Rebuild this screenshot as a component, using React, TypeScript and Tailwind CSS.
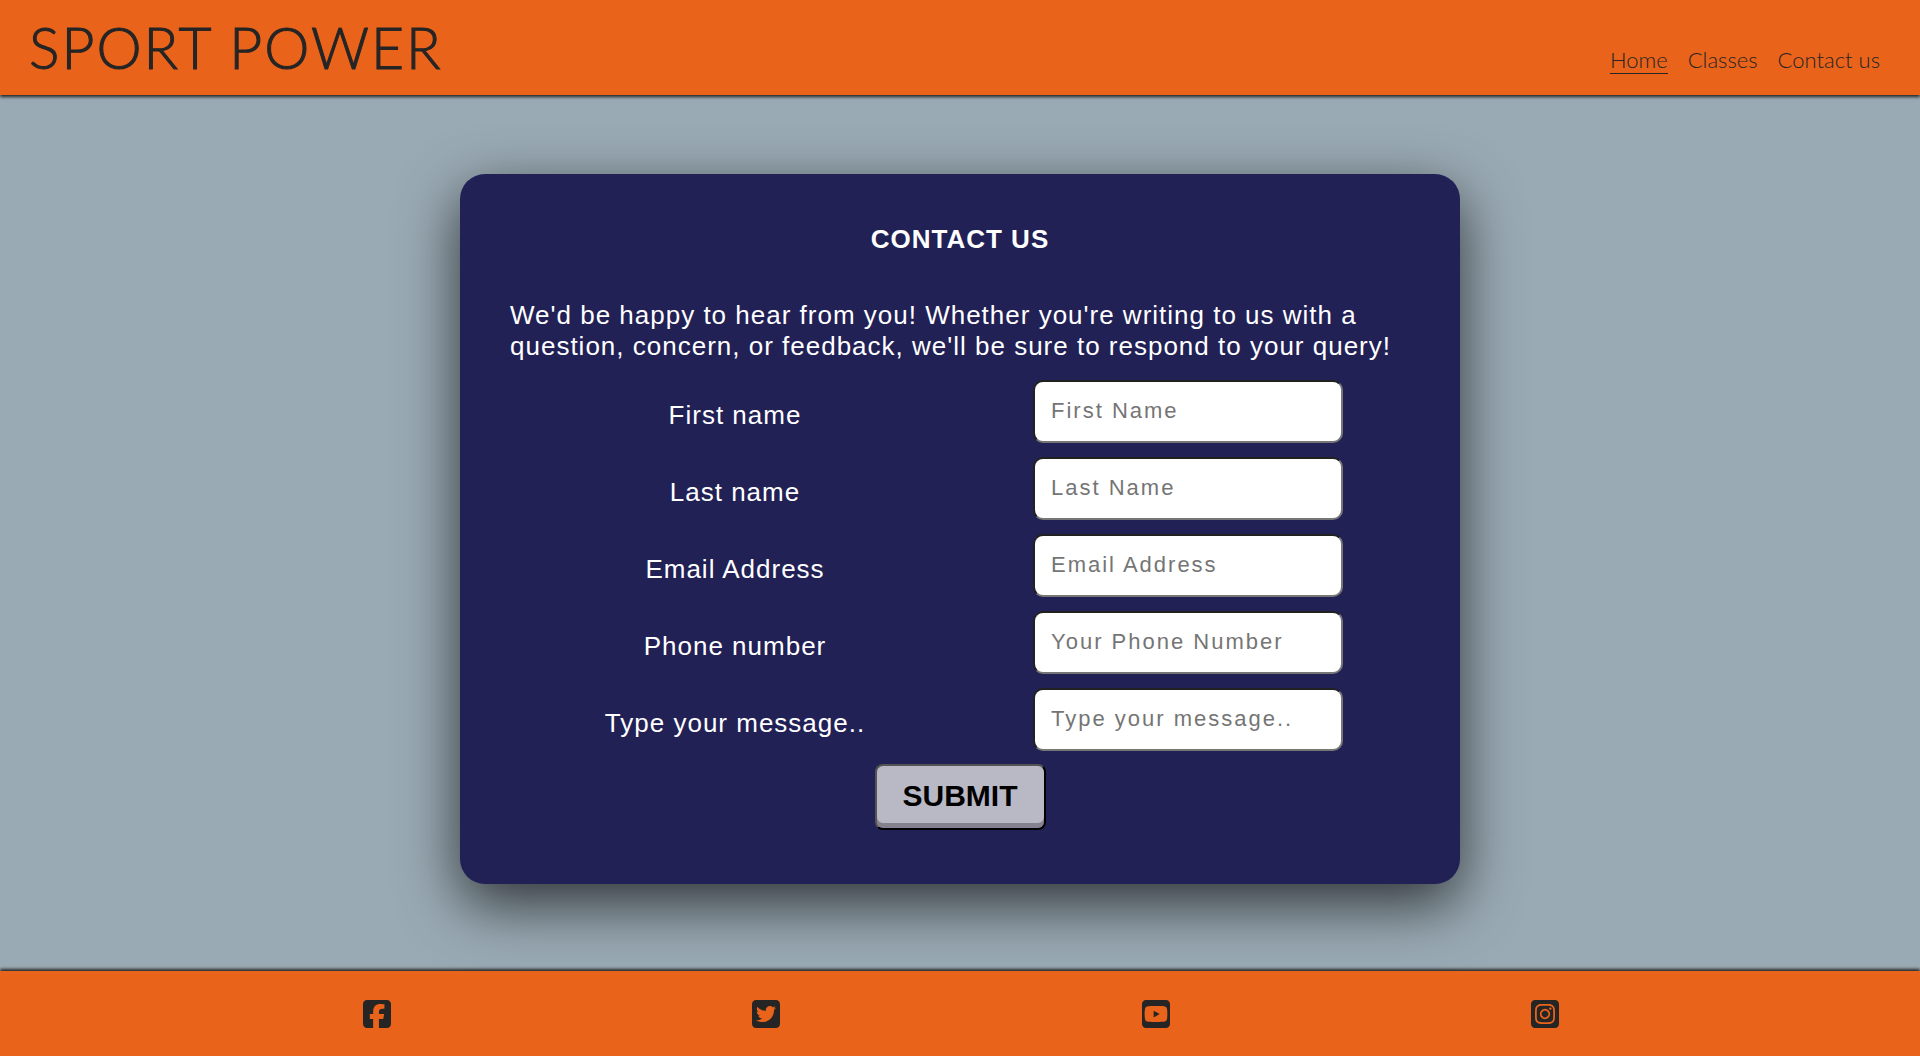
import type { IconType } from "react-icons";
import {
  FaSquareFacebook,
  FaSquareInstagram,
  FaSquareTwitter,
  FaSquareYoutube,
} from "react-icons/fa6";

const links = ["Home", "Classes", "Contact us"];

const fields = [
  { id: "first-name", label: "First name", placeholder: "First Name", type: "text" },
  { id: "last-name", label: "Last name", placeholder: "Last Name", type: "text" },
  { id: "email", label: "Email Address", placeholder: "Email Address", type: "email" },
  { id: "phone", label: "Phone number", placeholder: "Your Phone Number", type: "tel" },
  { id: "message", label: "Type your message..", placeholder: "Type your message..", type: "text" },
];

const socials: { name: string; Icon: IconType }[] = [
  { name: "Facebook", Icon: FaSquareFacebook },
  { name: "Twitter", Icon: FaSquareTwitter },
  { name: "YouTube", Icon: FaSquareYoutube },
  { name: "Instagram", Icon: FaSquareInstagram },
];

function Header() {
  return (
    <header className="flex h-[95px] items-center justify-between bg-[#e9631a] pr-10 pl-[29px] font-['Lato',sans-serif] font-light text-[#252525] shadow-[0_2px_3px_#252525]">
      <h1 className="pb-0.5 text-[57px] leading-[70px] tracking-[2px] [-webkit-text-stroke:1px_#252525]">
        SPORT POWER
      </h1>
      <nav className="flex gap-5 pt-[26px] text-[22px] leading-[26px]">
        {links.map((link, i) => (
          <a
            key={link}
            href="#"
            className={i === 0 ? "border-b border-[#252525]" : "border-b border-transparent"}
          >
            {link}
          </a>
        ))}
      </nav>
    </header>
  );
}

function ContactForm() {
  return (
    <form className="w-full max-w-[1000px] rounded-[25px] bg-[#222156] px-[50px] pt-[50px] pb-[54px] text-[26px] leading-[31px] tracking-[1px] text-white shadow-[0_20px_60px_rgba(0,0,0,0.7)]">
      <h2 className="text-center font-bold">CONTACT US</h2>
      <p className="mt-[45px]">
        We'd be happy to hear from you! Whether you're writing to us with a question, concern, or
        feedback, we'll be sure to respond to your query!
      </p>
      <div className="mt-[18px] flex flex-col gap-[14px]">
        {fields.map((field) => (
          <div key={field.id} className="grid grid-cols-2 items-center">
            <label htmlFor={field.id} className="pt-2 text-center">
              {field.label}
            </label>
            <div className="flex justify-center pl-1.5">
              <input
                id={field.id}
                type={field.type}
                placeholder={field.placeholder}
                className="h-[63px] w-[310px] rounded-[10px] border-2 border-[#767676] bg-white px-4 pb-0.5 text-[22px] leading-[26px] tracking-[2px] text-black [border-style:inset] placeholder:text-[#757575]"
              />
            </div>
          </div>
        ))}
      </div>
      <div className="mt-[13px] flex justify-center">
        <button
          type="submit"
          className="h-[66px] rounded-[8px] border-2 border-black bg-[#b9b9c5] px-[26px] pb-0.5 text-[30px] leading-[34px] font-bold tracking-normal text-black shadow-[inset_0_-5px_0_#85818e] [border-style:outset]"
        >
          SUBMIT
        </button>
      </div>
    </form>
  );
}

function Footer() {
  return (
    <footer className="flex h-[85px] items-center justify-evenly bg-[#e9631a] pl-0.5 text-[#252525] shadow-[0_-2px_3px_#252525]">
      {socials.map(({ name, Icon }) => (
        <a key={name} href="#" aria-label={name}>
          <Icon className="h-8 w-7" />
        </a>
      ))}
    </footer>
  );
}

export default function App() {
  return (
    <div className="flex min-h-screen flex-col bg-[#9aaab4] font-['Liberation_Sans',Arial,sans-serif]">
      <Header />
      <main className="flex flex-1 items-start justify-center pt-[79px] pb-[86px]">
        <ContactForm />
      </main>
      <Footer />
    </div>
  );
}
